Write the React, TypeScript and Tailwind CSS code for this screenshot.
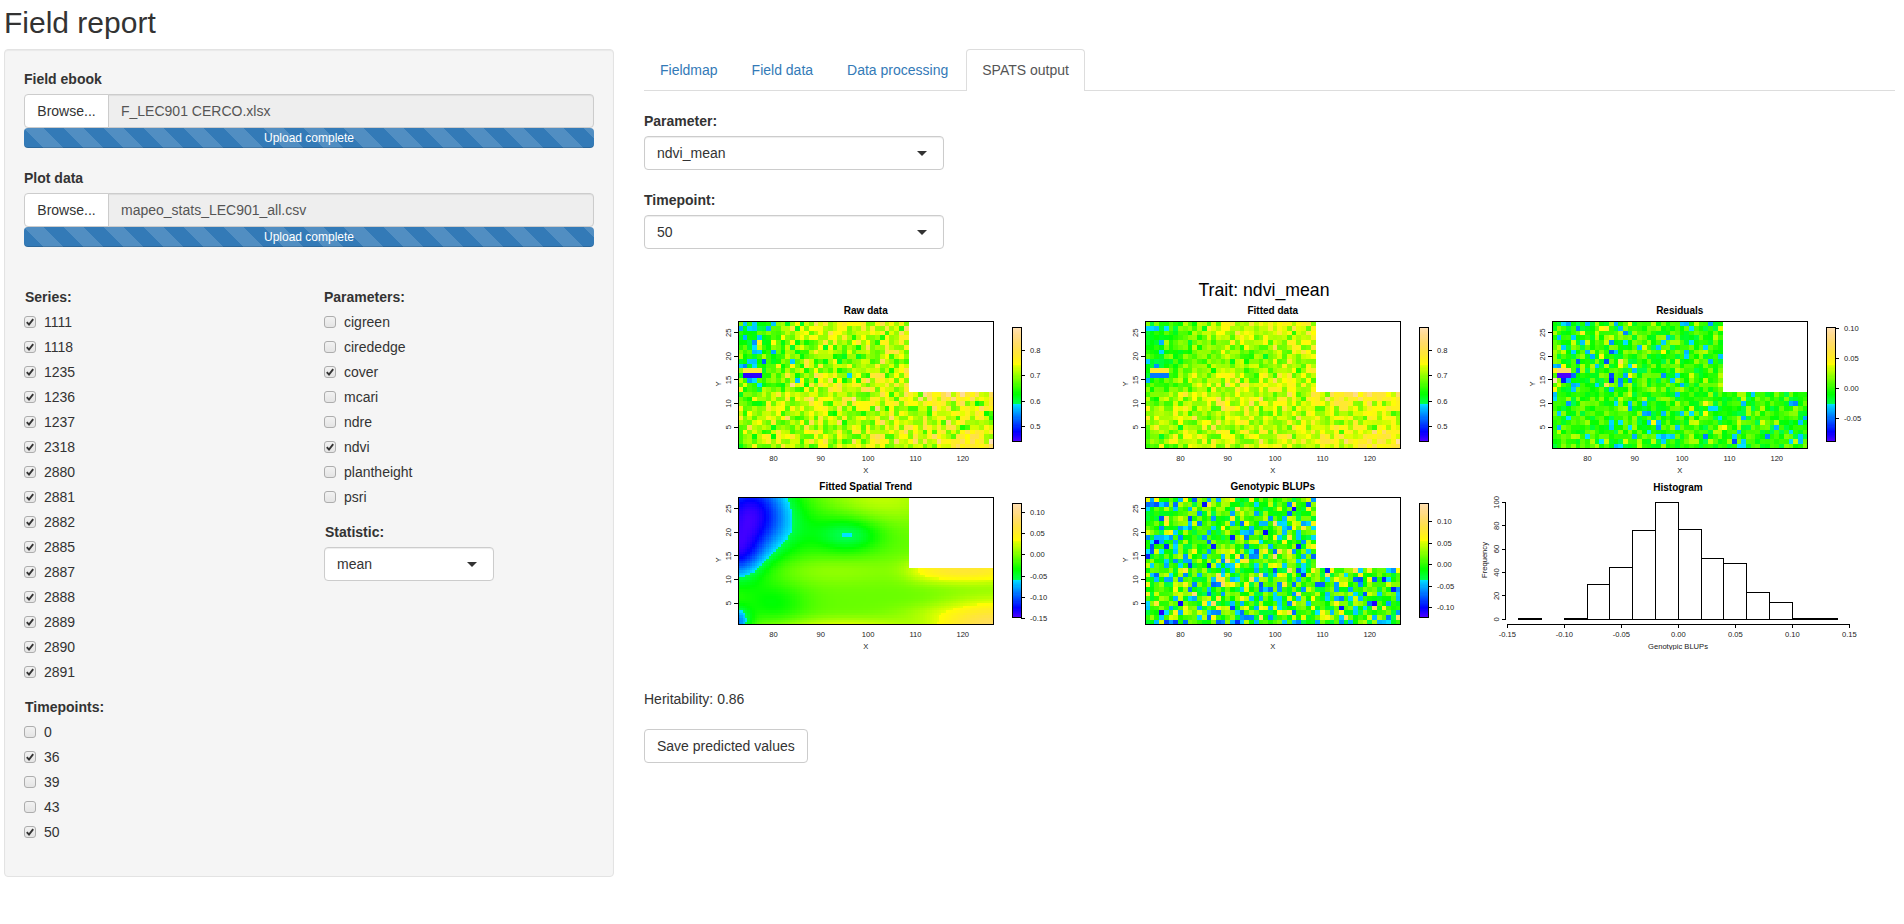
import React from "react";

const SERIES = ["1111", "1118", "1235", "1236", "1237", "2318", "2880", "2881", "2882", "2885", "2887", "2888", "2889", "2890", "2891"];
const PARAMETERS: [string, boolean][] = [
    ["cigreen", false],
    ["cirededge", false],
    ["cover", true],
    ["mcari", false],
    ["ndre", false],
    ["ndvi", true],
    ["plantheight", false],
    ["psri", false],
];
const TIMEPOINTS: [string, boolean][] = [
    ["0", false],
    ["36", true],
    ["39", false],
    ["43", false],
    ["50", true],
];

const BOX = { x: 94, y: 23, w: 255.5, h: 127.3 };
const BAR = { x: 368, y: 29, w: 9, h: 114 };

// R's topo.colors, sampled on 0..1
function hsv(h: number, s: number, v: number) {
    const c = v * s;
    const hh = ((h % 360) + 360) % 360 / 60;
    const x = c * (1 - Math.abs((hh % 2) - 1));
    let rgb = [0, 0, 0];
    if (hh < 1) rgb = [c, x, 0];
    else if (hh < 2) rgb = [x, c, 0];
    else if (hh < 3) rgb = [0, c, x];
    else if (hh < 4) rgb = [0, x, c];
    else if (hh < 5) rgb = [x, 0, c];
    else rgb = [c, 0, x];
    const m = v - c;
    return `rgb(${rgb.map((n) => Math.round((n + m) * 255)).join(",")})`;
}

function topo(t: number) {
    const v = Math.max(0, Math.min(1, t));
    if (v < 1 / 3) return hsv(258 - (v * 3) * 72, 1, 1);
    if (v < 2 / 3) return hsv(138 - ((v - 1 / 3) * 3) * 72, 1, 1);
    const k = (v - 2 / 3) * 3;
    return hsv(60 - k * 24, 1 - k * 0.7, 1);
}

function rng(seed: number) {
    let a = seed;
    return () => {
        a = (a + 0x6d2b79f5) | 0;
        let t = Math.imul(a ^ (a >>> 15), 1 | a);
        t = (t + Math.imul(t ^ (t >>> 7), 61 | t)) ^ t;
        return ((t ^ (t >>> 14)) >>> 0) / 4294967296;
    };
}

function normalField(seed: number, sd: number) {
    const r = rng(seed);
    const out: number[][] = [];
    for (let y = 0; y <= 27; y++) {
        const row: number[] = [];
        for (let x = 0; x <= 54; x++) {
            const n = r() + r() + r() + r() + r() + r() - 3;
            row.push(n * 1.41 * sd);
        }
        out.push(row);
    }
    return out;
}

const blob = (x: number, y: number, cx: number, cy: number, sx: number, sy: number) =>
    Math.exp(-(((x - cx) / sx) ** 2) - ((y - cy) / sy) ** 2);
const sig = (v: number) => 1 / (1 + Math.exp(-v));

function trend(x: number, y: number) {
    let v = -0.004;
    v -= 0.13 * blob(x, y, 75, 24, 8.5, 9);
    v -= 0.08 * blob(x, y, 72, 15, 5.5, 5.5);
    v -= 0.042 * blob(x, y, 96, 19.5, 6.5, 3.5);
    v -= 0.018 * blob(x, y, 90, 21, 13, 7);
    v -= 0.03 * blob(x, y, 80, 5, 7, 4.5);
    v -= 0.09 * blob(x, y, 72, 1, 3, 3);
    v += 0.062 * sig((x - 108) / 2) * blob(x, y, 120, 12, 16, 2.7);
    v += 0.085 * sig((x - 112) / 3) * blob(x, y, 127, 0, 14, 5.5);
    v += 0.035 * blob(x, y, 95, 0, 16, 2);
    v += 0.028 * blob(x, y, 102, 27, 12, 5);
    v += 0.015 * blob(x, y, 92, 12, 14, 3);
    v += 0.012 * blob(x, y, 112, 3, 8, 2);
    return v;
}

const inField = (x: number, y: number) => y < 12.5 || x < 108.5;

const BLUP = normalField(11, 0.04);
const RESID = normalField(29, 0.017);

function blupAt(x: number, y: number) {
    return BLUP[y][x - 73];
}

function residAt(x: number, y: number) {
    if (y === 16 && x >= 74 && x <= 76) return -0.088;
    if (y === 17 && x >= 74 && x <= 76) return 0.075;
    if (y === 15 && x === 73) return 0.1;
    // the upper left block is noisier than the rest of the field
    const scale = x < 90 && y > 12 ? 1.45 : 1;
    return RESID[y][x - 73] * scale - (y < 13 ? 0.002 : 0);
}

function fittedAt(x: number, y: number) {
    if (y === 16 && x >= 74 && x <= 77) return 0.54;
    if (y === 17 && x >= 74 && x <= 77) return 0.78;
    const t = trend(x, y);
    return 0.725 + t * (t < 0 ? 0.65 : 0.9) + blupAt(x, y) * 0.85;
}

function rawAt(x: number, y: number) {
    if (y === 16 && x >= 74 && x <= 77) return 0.46;
    if (y === 17 && x >= 74 && x <= 77) return 0.79;
    return fittedAt(x, y) + residAt(x, y) * 1.5;
}

function Cells({ value, min, max, step = 1 }: { value: (x: number, y: number) => number; min: number; max: number; step?: number }) {
    const cw = BOX.w / 54;
    const ch = BOX.h / 27;
    const cells: React.ReactNode[] = [];
    const nx = 54 / step;
    const ny = 27 / step;
    for (let i = 0; i < nx; i++) {
        for (let j = 0; j < ny; j++) {
            const x = step === 1 ? 73 + i : 72.5 + (i + 0.5) * step;
            const y = step === 1 ? 1 + j : 0.5 + (j + 0.5) * step;
            if (!inField(x, y)) continue;
            const t = (value(x, y) - min) / (max - min);
            cells.push(
                <rect
                    key={`${i}-${j}`}
                    x={BOX.x + i * cw * step}
                    y={BOX.y + BOX.h - (j + 1) * ch * step}
                    width={cw * step + 0.3}
                    height={ch * step + 0.3}
                    fill={topo(t)}
                />
            );
        }
    }
    return <g shapeRendering="crispEdges">{cells}</g>;
}

function ColorBar({ min, max, ticks, digits }: { min: number; max: number; ticks: number[]; digits: number }) {
    const steps = Array.from({ length: 100 }, (_, i) => i);
    return (
        <g>
            <g shapeRendering="crispEdges">
                {steps.map((i) => (
                    <rect key={i} x={BAR.x} y={BAR.y + BAR.h - ((i + 1) * BAR.h) / 100} width={BAR.w} height={BAR.h / 100 + 0.4} fill={topo((i + 0.5) / 100)} />
                ))}
                <rect x={BAR.x} y={BAR.y} width={BAR.w} height={BAR.h} fill="none" stroke="#000" />
            </g>
            {ticks.map((v) => {
                const y = BAR.y + BAR.h - ((v - min) / (max - min)) * BAR.h;
                return (
                    <g key={v}>
                        <line x1={BAR.x + BAR.w} x2={BAR.x + BAR.w + 4} y1={y} y2={y} stroke="#000" shapeRendering="crispEdges" />
                        <text x={BAR.x + BAR.w + 9} y={y} fontSize={7.6} fill="#222" dominantBaseline="central">
                            {v.toFixed(digits)}
                        </text>
                    </g>
                );
            })}
        </g>
    );
}

interface HeatPlotProps {
    title: string;
    value: (x: number, y: number) => number;
    min: number;
    max: number;
    ticks: number[];
    digits: number;
    step?: number;
}

function HeatPlot({ title, value, min, max, ticks, digits, step }: HeatPlotProps) {
    const cw = BOX.w / 54;
    const ch = BOX.h / 27;
    return (
        <svg width={407} height={176} viewBox="0 0 407 176">
            <text x={BOX.x + BOX.w / 2} y={12.7} fontSize={10} fontWeight={700} fill="#000" textAnchor="middle" dominantBaseline="central">
                {title}
            </text>
            <Cells value={value} min={min} max={max} step={step} />
            <rect x={BOX.x} y={BOX.y} width={BOX.w} height={BOX.h} fill="none" stroke="#000" shapeRendering="crispEdges" />
            {[5, 10, 15, 20, 25].map((v) => {
                const y = BOX.y + BOX.h - (v - 0.5) * ch;
                return (
                    <g key={v}>
                        <line x1={BOX.x - 4} x2={BOX.x} y1={y} y2={y} stroke="#000" shapeRendering="crispEdges" />
                        <text transform={`translate(${BOX.x - 9.5} ${y}) rotate(-90)`} fontSize={7.6} fill="#222" textAnchor="middle" dominantBaseline="central">
                            {v}
                        </text>
                    </g>
                );
            })}
            <text transform={`translate(74 86) rotate(-90)`} fontSize={7.6} fill="#222" textAnchor="middle" dominantBaseline="central">
                Y
            </text>
            {[80, 90, 100, 110, 120].map((v) => (
                <text key={v} x={BOX.x + (v - 72.5) * cw} y={160} fontSize={7.6} fill="#222" textAnchor="middle" dominantBaseline="central">
                    {v}
                </text>
            ))}
            <text x={BOX.x + BOX.w / 2} y={172} fontSize={7.6} fill="#222" textAnchor="middle" dominantBaseline="central">
                X
            </text>
            <ColorBar min={min} max={max} ticks={ticks} digits={digits} />
        </svg>
    );
}

const HIST = [1, 0, 1, 30, 44.5, 76, 100, 77, 52, 48, 23, 14, 1, 1];

function Histogram() {
    const px = (v: number) => 49.3 + ((v + 0.15) / 0.3) * 342;
    const py = (c: number) => 145.3 - c * 1.17;
    return (
        <svg width={407} height={176} viewBox="0 0 407 176">
            <text x={220} y={13} fontSize={10} fontWeight={700} fill="#000" textAnchor="middle" dominantBaseline="central">
                Histogram
            </text>
            <g shapeRendering="crispEdges" stroke="#000">
                {HIST.map((c, i) => {
                    const a = px(-0.14 + i * 0.02);
                    const b = px(-0.12 + i * 0.02);
                    return <rect key={i} x={a} y={py(c)} width={b - a} height={145.3 - py(c)} fill="none" />;
                })}
                <line x1={47.7} x2={47.7} y1={py(0)} y2={py(100)} />
                {[0, 20, 40, 60, 80, 100].map((v) => (
                    <line key={v} x1={43.7} x2={47.7} y1={py(v)} y2={py(v)} />
                ))}
                <line x1={px(-0.15)} x2={px(0.15)} y1={150.3} y2={150.3} />
                {[-0.15, -0.1, -0.05, 0, 0.05, 0.1, 0.15].map((v) => (
                    <line key={v} x1={px(v)} x2={px(v)} y1={150.3} y2={154} />
                ))}
            </g>
            {[0, 20, 40, 60, 80, 100].map((v) => (
                <text key={v} transform={`translate(38.5 ${py(v)}) rotate(-90)`} fontSize={7.6} fill="#222" textAnchor="middle" dominantBaseline="central">
                    {v}
                </text>
            ))}
            <text transform="translate(26.5 86) rotate(-90)" fontSize={7.6} fill="#222" textAnchor="middle" dominantBaseline="central">
                Frequency
            </text>
            {[-0.15, -0.1, -0.05, 0, 0.05, 0.1, 0.15].map((v) => (
                <text key={v} x={px(v)} y={160} fontSize={7.6} fill="#222" textAnchor="middle" dominantBaseline="central">
                    {v.toFixed(2)}
                </text>
            ))}
            <text x={220} y={172} fontSize={7.6} fill="#222" textAnchor="middle" dominantBaseline="central">
                Genotypic BLUPs
            </text>
        </svg>
    );
}

function Check({ label, checked }: { label: string; checked: boolean }) {
    return (
        <div className="flex h-5 items-center gap-2 text-[14px] text-[#333]">
            <span className="h-3 w-3 shrink-0 rounded-[3px] border border-[#adadad] bg-[linear-gradient(#f2f2f2,#e4e4e4)]">
                {checked && (
                    <svg viewBox="0 0 10 10" className="h-[10px] w-[10px]">
                        <path d="M1.8 5.2 L4 7.6 L8.2 2.2" fill="none" stroke="#333" strokeWidth="1.9" />
                    </svg>
                )}
            </span>
            <span>{label}</span>
        </div>
    );
}

function CheckGroup({ title, items, titleClass = "" }: { title: string; items: [string, boolean][]; titleClass?: string }) {
    return (
        <div>
            <div className={`mb-[5px] h-5 text-[14px] leading-5 font-bold text-[#333] ${titleClass}`}>{title}</div>
            <div className="flex flex-col gap-[5px]">
                {items.map(([label, checked]) => (
                    <Check key={label} label={label} checked={checked} />
                ))}
            </div>
        </div>
    );
}

function FileInput({ label, file }: { label: string; file: string }) {
    return (
        <div>
            <div className="mb-[5px] h-5 text-[14px] leading-5 font-bold text-[#333]">{label}</div>
            <div className="flex h-[34px]">
                <div className="flex w-[85px] items-center justify-center rounded-l border border-[#ccc] bg-white text-[14px] text-[#333]">Browse...</div>
                <div className="-ml-px flex-1 rounded-r border border-[#ccc] bg-[#eee] px-3 py-1.5 text-[14px] leading-5 text-[#555] shadow-[inset_0_1px_1px_rgba(0,0,0,0.075)]">{file}</div>
            </div>
            <div className="h-5 rounded bg-[#337ab7] bg-[linear-gradient(45deg,rgba(255,255,255,.15)_25%,transparent_25%,transparent_50%,rgba(255,255,255,.15)_50%,rgba(255,255,255,.15)_75%,transparent_75%,transparent)] bg-[length:40px_40px] text-center text-[12px] leading-5 text-white shadow-[inset_0_-1px_0_rgba(0,0,0,0.15)]">
                Upload complete
            </div>
        </div>
    );
}

function SelectBox({ value, className }: { value: string; className: string }) {
    return (
        <div className={`flex h-[34px] items-center justify-between rounded border border-[#ccc] bg-white pr-4 pl-3 text-[14px] text-[#333] shadow-[inset_0_1px_1px_rgba(0,0,0,0.075)] ${className}`}>
            <span>{value}</span>
            <span className="h-0 w-0 border-x-[5px] border-t-[5px] border-x-transparent border-t-[#333]" />
        </div>
    );
}

function Sidebar() {
    return (
        <div className="h-[828px] w-[610px] shrink-0 rounded border border-[#e3e3e3] bg-[#f5f5f5] p-[19px] shadow-[inset_0_1px_1px_rgba(0,0,0,0.05)]">
            <div className="flex flex-col gap-5">
                <FileInput label="Field ebook" file="F_LEC901 CERCO.xlsx" />
                <FileInput label="Plot data" file="mapeo_stats_LEC901_all.csv" />
            </div>
            <div className="mt-10 flex">
                <div className="w-[300px] shrink-0">
                    <CheckGroup title="Series:" titleClass="pl-px" items={SERIES.map((s): [string, boolean] => [s, true])} />
                    <div className="mt-[15px]">
                        <CheckGroup title="Timepoints:" titleClass="pl-px" items={TIMEPOINTS} />
                    </div>
                </div>
                <div>
                    <CheckGroup title="Parameters:" items={PARAMETERS} />
                    <div className="mt-[15px] mb-[5px] h-5 pl-px text-[14px] leading-5 font-bold text-[#333]">Statistic:</div>
                    <SelectBox value="mean" className="w-[170px]" />
                </div>
            </div>
        </div>
    );
}

function Tabs() {
    return (
        <div className="flex h-[42px] border-b border-[#ddd] text-[14px] leading-5">
            {["Fieldmap", "Field data", "Data processing"].map((tab) => (
                <a key={tab} className="mr-0.5 h-[41px] border border-transparent px-[15px] py-2.5 text-[#337ab7]">
                    {tab}
                </a>
            ))}
            <a className="h-[42px] rounded-t border border-b-0 border-[#ddd] bg-white px-[15px] py-2.5 text-[#555]">SPATS output</a>
        </div>
    );
}

function Figure() {
    return (
        <div className="mt-[31px] w-[1240px]">
            <div className="h-[18px] text-center text-[17.7px] leading-5 text-black">Trait: ndvi_mean</div>
            <div className="grid grid-cols-[407px_407px_407px] grid-rows-[176px_176px]">
                <HeatPlot title="Raw data" value={rawAt} min={0.444} max={0.89} ticks={[0.5, 0.6, 0.7, 0.8]} digits={1} />
                <HeatPlot title="Fitted data" value={fittedAt} min={0.444} max={0.89} ticks={[0.5, 0.6, 0.7, 0.8]} digits={1} />
                <HeatPlot title="Residuals" value={residAt} min={-0.088} max={0.103} ticks={[-0.05, 0, 0.05, 0.1]} digits={2} />
                <HeatPlot title="Fitted Spatial Trend" value={trend} min={-0.147} max={0.123} ticks={[-0.15, -0.1, -0.05, 0, 0.05, 0.1]} digits={2} step={0.5} />
                <HeatPlot title="Genotypic BLUPs" value={blupAt} min={-0.121} max={0.143} ticks={[-0.1, -0.05, 0, 0.05, 0.1]} digits={2} />
                <Histogram />
            </div>
        </div>
    );
}

export default function App() {
    return (
        <div className="min-h-[924px] bg-white pt-[6px] pr-[9px] pl-1 [font-family:'Liberation_Sans',Arial,sans-serif]">
            <h2 className="mb-2.5 h-[33px] text-[30px] leading-[33px] font-medium text-[#333]">Field report</h2>
            <div className="flex">
                <Sidebar />
                <div className="ml-[30px] flex-1">
                    <Tabs />
                    <div className="mt-5 mb-[5px] h-5 text-[14px] leading-5 font-bold text-[#333]">Parameter:</div>
                    <SelectBox value="ndvi_mean" className="w-[300px]" />
                    <div className="mt-5 mb-[5px] h-5 text-[14px] leading-5 font-bold text-[#333]">Timepoint:</div>
                    <SelectBox value="50" className="w-[300px]" />
                    <Figure />
                    <div className="mt-[39px] h-5 text-[14px] leading-5 text-[#333]">Heritability: 0.86</div>
                    <button className="mt-5 h-[34px] rounded border border-[#ccc] bg-white px-3 text-[14px] text-[#333]">Save predicted values</button>
                </div>
            </div>
        </div>
    );
}
